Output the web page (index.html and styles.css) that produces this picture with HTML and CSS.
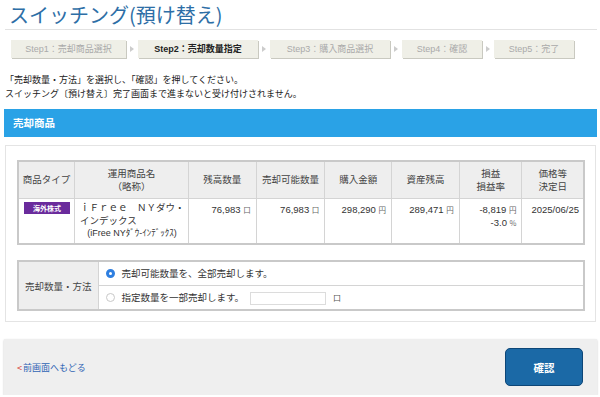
FILE: index.html
```html
<!DOCTYPE html>
<html lang="ja">
<head>
<meta charset="utf-8">
<title>スイッチング(預け替え)</title>
<link rel="stylesheet" href="styles.css">
</head>
<body>
<div id="page">
  <h1 class="title">スイッチング(預け替え)</h1>

  <ul class="steps">
    <li class="step s1">Step1：売却商品選択</li>
    <li class="arrow"></li>
    <li class="step s2 current">Step2：売却数量指定</li>
    <li class="arrow"></li>
    <li class="step s3">Step3：購入商品選択</li>
    <li class="arrow"></li>
    <li class="step s4">Step4：確認</li>
    <li class="arrow"></li>
    <li class="step s5">Step5：完了</li>
  </ul>

  <p class="notes">
    「売却数量・方法」を選択し、「確認」を押してください。<br>
    スイッチング〔預け替え〕完了画面まで進まないと受け付けされません。
  </p>

  <h2 class="band">売却商品</h2>

  <div class="panel">
    <table class="items">
      <colgroup>
        <col style="width:57px"><col style="width:114px"><col style="width:68px"><col style="width:69px">
        <col style="width:67px"><col style="width:68px"><col style="width:63px"><col style="width:62px">
      </colgroup>
      <tr>
        <th>商品タイプ</th>
        <th>運用商品名<br>（略称）</th>
        <th>残高数量</th>
        <th>売却可能数量</th>
        <th>購入金額</th>
        <th>資産残高</th>
        <th>損益<br>損益率</th>
        <th>価格等<br>決定日</th>
      </tr>
      <tr>
        <td class="type"><span class="badge">海外株式</span></td>
        <td class="name">ｉＦｒｅｅ　ＮＹダウ・<br>インデックス<div class="short">(iFree NYﾀﾞｳ-ｲﾝﾃﾞｯｸｽ)</div></td>
        <td class="num">76,983 <span class="unit">口</span></td>
        <td class="num">76,983 <span class="unit">口</span></td>
        <td class="num">298,290 <span class="unit">円</span></td>
        <td class="num">289,471 <span class="unit">円</span></td>
        <td class="num">-8,819 <span class="unit">円</span><br>-3.0 <span class="unit">%</span></td>
        <td class="date">2025/06/25</td>
      </tr>
    </table>

    <table class="method">
      <tr>
        <th rowspan="2">売却数量・方法</th>
        <td><span class="radio on"></span>売却可能数量を、全部売却します。</td>
      </tr>
      <tr>
        <td><span class="radio"></span>指定数量を一部売却します。<span class="qty"></span><span class="unit2">口</span></td>
      </tr>
    </table>
  </div>

  <div class="footer">
    <a class="back" href="#"><span class="lt">&lt;</span>前画面へもどる</a>
    <button class="confirm">確認</button>
  </div>
</div>
</body>
</html>
```

FILE: styles.css
```css
* {
  margin: 0;
  padding: 0;
  box-sizing: border-box;
}
body {
  background: #fff;
  font-family: "Liberation Sans", "Noto Sans CJK JP", sans-serif;
  font-size: 9.5px;
  color: #333;
}
#page {
  width: 600px;
  padding: 0 3px 0 4px;
}

/* title */
.title {
  font-family: "Noto Sans CJK JP", sans-serif;
  font-weight: normal;
  font-size: 20px;
  line-height: 24px;
  color: #2d6ea6;
  padding: 3px 0 2px 4px;
  border-bottom: 1px solid #e2e2e2;
  margin-left: 1px;
}

/* steps */
.steps {
  list-style: none;
  display: flex;
  align-items: center;
  margin-top: 9px;
  padding-left: 7px;
  height: 19px;
}
.step {
  height: 18px;
  line-height: 18px;
  background: #efefe7;
  box-shadow: 1px 1px 0 #c9c9c0;
  color: #aaa;
  text-align: center;
  font-size: 9px;
}
.step.current {
  color: #222;
  font-weight: bold;
}
.s1 { width: 115px; }
.s2 { width: 120px; }
.s3 { width: 120px; }
.s4 { width: 80px; }
.s5 { width: 80px; }
.arrow {
  width: 12px;
  height: 18px;
  position: relative;
}
.arrow::after {
  content: "";
  position: absolute;
  left: 4px;
  top: 6px;
  border-left: 4px solid #ccc;
  border-top: 3px solid transparent;
  border-bottom: 3px solid transparent;
}

/* notes */
.notes {
  margin-top: 15px;
  padding-left: 1px;
  font-family: "Noto Sans CJK JP", sans-serif;
  font-size: 9px;
  line-height: 14px;
  color: #222;
}

/* band */
.band {
  margin-top: 8px;
  height: 28px;
  line-height: 28px;
  background: #2aa2e6;
  color: #fff;
  font-size: 10.5px;
  font-weight: bold;
  padding-left: 9px;
  font-family: "Noto Sans CJK JP", sans-serif;
}

/* panel */
.panel {
  margin: 8px 1px 0 1px;
  border: 1px solid #e4e4e4;
  padding: 14px 11px 10px 11px;
}
table {
  border-collapse: collapse;
  width: 568px;
}
.items {
  border: 2px solid #c9c9c9;
}
.items th,
.items td {
  border: 1px solid #d4d4d4;
}
.items th {
  background: #eeeeee;
  font-weight: normal;
  height: 37px;
  line-height: 13px;
  text-align: center;
  color: #444;
  font-family: "Noto Sans CJK JP", sans-serif;
}
.items td {
  height: 46px;
  vertical-align: top;
  padding: 3px 5px 0 5px;
  line-height: 13px;
  color: #333;
}
.items td.type {
  padding: 3px 4px 0 5px;
}
.badge {
  display: block;
  background: #6a2b9c;
  color: #fff;
  font-size: 7px;
  font-weight: bold;
  height: 12px;
  line-height: 12px;
  text-align: center;
  font-family: "Noto Sans CJK JP", sans-serif;
}
.items td.name {
  font-family: "Noto Sans CJK JP", sans-serif;
  font-size: 9.5px;
  padding: 2px 0 0 5px;
  line-height: 13px;
  white-space: nowrap;
}
.short {
  text-align: center;
  font-family: "Liberation Sans", "Noto Sans CJK JP", sans-serif;
  font-size: 9px;
  padding-right: 4px;
}
.items td.num {
  text-align: right;
  padding-top: 4px;
  padding-right: 5px;
}
.unit {
  font-size: 7.5px;
  color: #666;
  font-family: "Noto Sans CJK JP", sans-serif;
}
.items td.date {
  text-align: right;
  padding-top: 4px;
  padding-right: 4px;
}

/* method table */
.method {
  margin-top: 15px;
  border: 2px solid #c9c9c9;
  font-family: "Noto Sans CJK JP", sans-serif;
}
.method th {
  width: 80px;
  background: #eeeeee;
  font-weight: normal;
  color: #444;
  border-right: 1px solid #d4d4d4;
}
.method td {
  height: 24px;
  padding-left: 7px;
  color: #333;
}
.method tr + tr td {
  border-top: 1px solid #d4d4d4;
  height: 25px;
}
.radio {
  display: inline-block;
  width: 9px;
  height: 9px;
  border-radius: 50%;
  border: 1px solid #c8c8c8;
  background: #fff;
  vertical-align: -1px;
  margin-right: 7px;
}
.radio.on {
  border: 3px solid #2f7fe0;
}
.qty {
  display: inline-block;
  width: 76px;
  height: 13px;
  border: 1px solid #dcdcdc;
  vertical-align: middle;
  margin-left: 6px;
}
.unit2 {
  margin-left: 7px;
  font-size: 8px;
  color: #555;
}

/* footer */
.footer {
  margin-top: 17px;
  height: 56px;
  background: #efefef;
  box-shadow: 0 1px 2px #c8c8c8;
  display: flex;
  align-items: center;
  justify-content: space-between;
  padding: 0 14px 0 13px;
}
.back {
  color: #2f64b4;
  text-decoration: none;
  font-family: "Noto Sans CJK JP", sans-serif;
  font-size: 9px;
  margin-top: 1px;
}
.lt {
  color: #d6332b;
  margin-right: 1px;
}
.confirm {
  width: 78px;
  height: 38px;
  background: #1b69a6;
  border: 1px solid #0d4677;
  border-radius: 5px;
  color: #fff;
  font-family: "Noto Sans CJK JP", sans-serif;
  font-weight: bold;
  font-size: 10.5px;
}
```
